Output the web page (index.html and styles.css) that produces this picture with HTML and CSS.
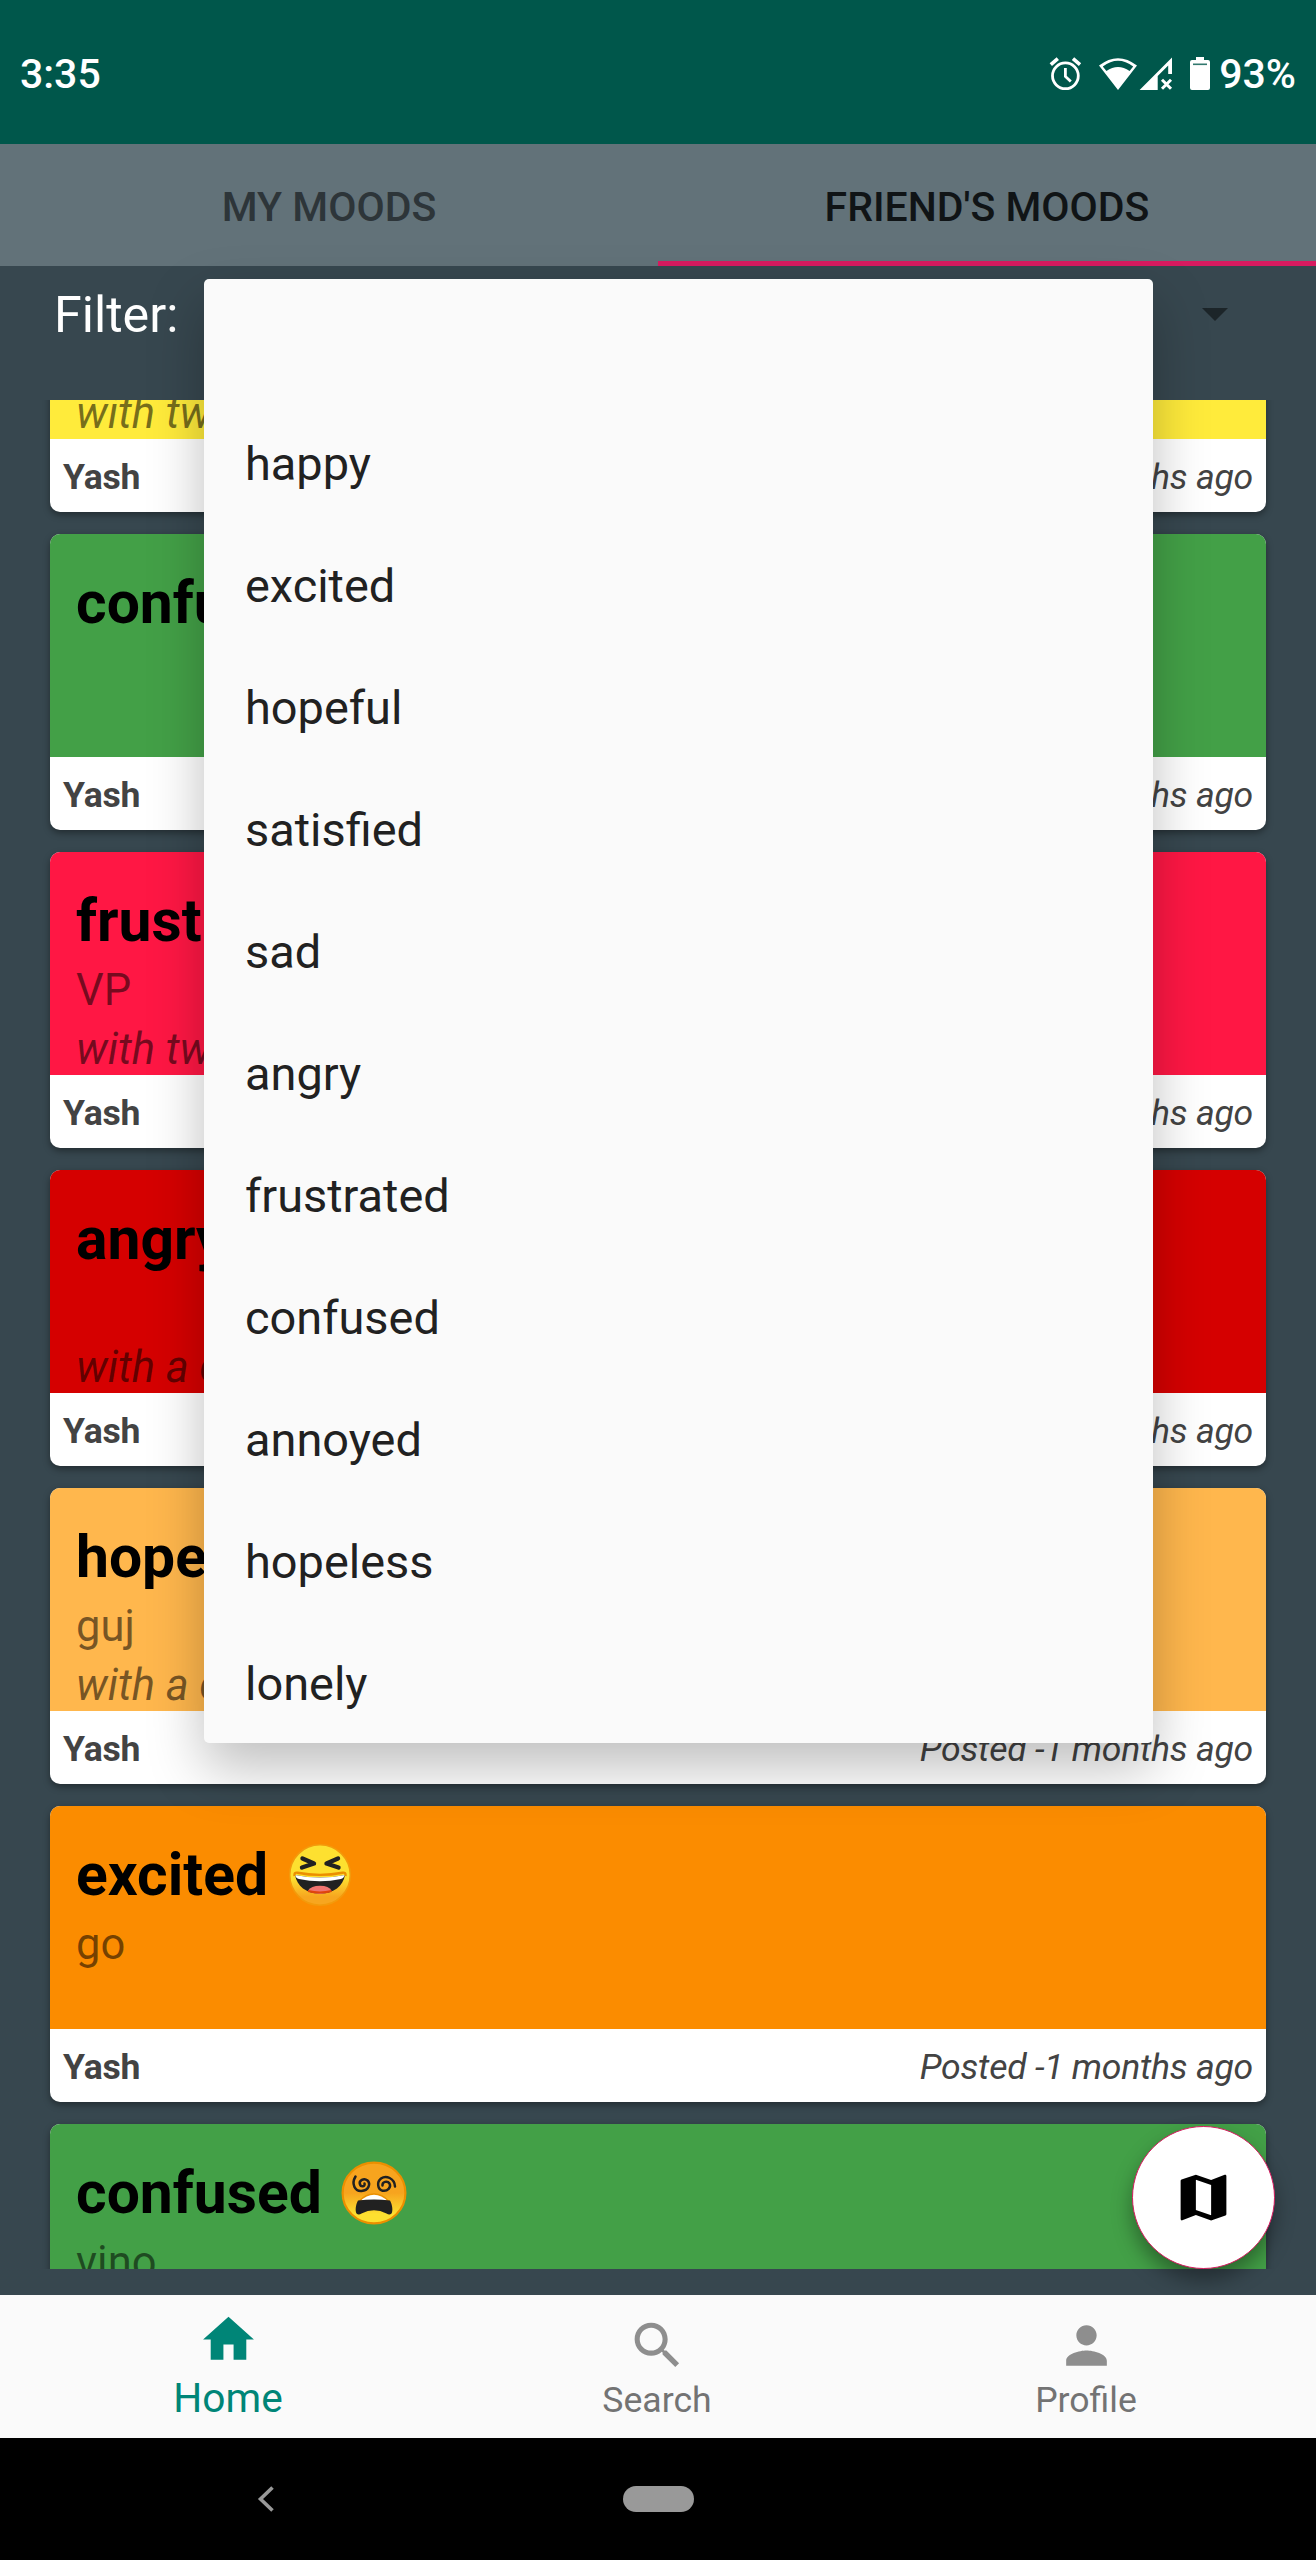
FILE: index.html
```html
<!DOCTYPE html>
<html lang="en">
<head>
<meta charset="utf-8">
<title>Friend's Moods</title>
<link rel="stylesheet" href="styles.css">
</head>
<body>
<div class="screen">
  <header class="status">
    <span class="status-text clock">3:35</span>
    <svg class="status-icons" width="162" height="36" viewBox="0 0 162 36">
      <g fill="none" stroke="#fff" stroke-width="2.8">
        <circle cx="16.4" cy="19.8" r="12.9"/>
        <path d="M16.4 12v8.4l5.4 5.2"/>
        <path d="M1.8 8.6l7-6M31 8.6l-7-6" stroke-width="3.6"/>
      </g>
      <g fill="#fff">
        <path fill-rule="evenodd" d="M50 9.6Q69 -5.2 88 9.6L69 34zM53.8 10.6L57.4 14.9Q69 7.2 80.6 14.9L84.2 10.6Q69 -1.2 53.8 10.6z"/>
        <path fill-rule="evenodd" d="M90.600 34L123 1.500V18H119.200V9.500L108.700 20V34z"/>
        <path d="M113 23.800l9 9M122 23.800l-9 9" stroke="#fff" stroke-width="3"/>
        <path d="M147 1h8v3h4q2 0 2 2v26q0 2-2 2h-16q-2 0-2-2v-26q0-2 2-2h4z"/>
      </g>
      <path d="M144 8.300h14" stroke="#00574b" stroke-width="1.600" opacity=".8"/>
    </svg>
    <span class="status-text battery">93%</span>
  </header>

  <nav class="tabs">
    <span class="tab">MY MOODS</span>
    <span class="tab tab-active">FRIEND'S MOODS</span>
  </nav>

  <main class="content">
    <div class="filter">
      <span class="filter-label">Filter:</span>
      <svg class="caret" width="26" height="13" viewBox="0 0 26 13"><path d="M0 0h26L13 13z" fill="#1c2529"/></svg>
    </div>

    <div class="list">
      <article class="card card-first">
        <div class="card-body yellow"><h2></h2><p class="note"></p><p class="social">with two people</p></div>
        <footer><b>Yash</b><i>Posted -1 months ago</i></footer>
      </article>
      <article class="card">
        <div class="card-body green"><h2>confused</h2></div>
        <footer><b>Yash</b><i>Posted -1 months ago</i></footer>
      </article>
      <article class="card">
        <div class="card-body pink"><h2>frustrated</h2><p class="note">VP</p><p class="social">with two people</p></div>
        <footer><b>Yash</b><i>Posted -1 months ago</i></footer>
      </article>
      <article class="card">
        <div class="card-body red"><h2>angry</h2><p class="note"></p><p class="social">with a crowd</p></div>
        <footer><b>Yash</b><i>Posted -1 months ago</i></footer>
      </article>
      <article class="card">
        <div class="card-body amber"><h2>hopeful</h2><p class="note">guj</p><p class="social">with a crowd</p></div>
        <footer><b>Yash</b><i>Posted -1 months ago</i></footer>
      </article>
      <article class="card">
        <div class="card-body orange">
          <h2>excited
            <svg class="emoji" width="66" height="66" viewBox="0 0 66 66">
              <defs><linearGradient id="laugh" x1="0" y1="0" x2="0" y2="1"><stop offset=".55" stop-color="#fde030"/><stop offset=".86" stop-color="#f7a61f"/></linearGradient></defs>
              <circle cx="33" cy="33" r="30.300" fill="url(#laugh)" stroke="#f39a0b" stroke-width="1.600"/>
              <g fill="none" stroke="#212121" stroke-width="4.400" stroke-linecap="round" stroke-linejoin="round">
                <path d="M15.500 16.500L27 21.500 15 25.500M51 16.500L39.500 21.500 51.500 25.500"/>
              </g>
              <path d="M8 33Q33 38 58 33C56 44 47 51.500 33 51.500S10 44 8 33z" fill="#212121"/>
              <path d="M8 33Q33 38 58 33Q56.500 36.500 54 37Q33 41.500 12 37Q9 36.500 8 33z" fill="#fff"/>
              <path d="M21 48.600Q24 43.800 33 43.800T44.500 48.600Q39 52 33 52T21 48.600z" fill="#f07470"/>
              <path d="M21 49Q33 52 44.500 49" fill="none" stroke="#e0440d" stroke-width="2"/>
              <path d="M7.500 34Q7 30 10.500 30.700Q33 35 55.500 30.700Q59 30 58.500 34" fill="none" stroke="#eb8f00" stroke-width="2.400"/>
            </svg>
          </h2>
          <p class="note">go</p>
        </div>
        <footer><b>Yash</b><i>Posted -1 months ago</i></footer>
      </article>
      <article class="card">
        <div class="card-body green">
          <h2>confused
            <svg class="emoji" width="66" height="66" viewBox="0 0 66 66">
              <defs><linearGradient id="dizzy" x1="0" y1="0" x2="0" y2="1"><stop offset=".5" stop-color="#f7a41e"/><stop offset=".85" stop-color="#fde030"/></linearGradient></defs>
              <ellipse cx="33" cy="33" rx="31.400" ry="30.400" fill="url(#dizzy)" stroke="#eb8f00" stroke-width="2.200"/>
              <g fill="none" stroke="#212121" stroke-width="2.500" stroke-linecap="round">
                <path d="M14.500 16.500C10 24 14 31.500 20.500 31C27.500 30.500 30 24 26.500 20.500C23 17.500 17.500 20.500 19 24.500C20 27.500 24.500 26.500 23.500 23.500"/>
                <path d="M54 26.500C53.500 18 45 15 40 18.500C35.500 22 36.500 29.500 41.500 30.700C46.500 31.700 50.500 27 48.500 23.500C46.500 20.500 41 21.500 41.500 25.500"/>
              </g>
              <path d="M18.500 41Q25 34 33 34T47.500 41z" fill="#fff" stroke="#eb8f00" stroke-width="1.600"/>
              <path d="M17 40.500Q33 38.500 49 40.500C51.500 45 52 51 50.500 53.500Q48.500 55.500 45.500 53.500Q33 47 20.500 53.500Q17.500 55.500 15.500 53.500C14 51 14.500 45 17 40.500z" fill="#212121"/>
            </svg>
          </h2>
          <p class="note">vino</p>
        </div>
        <footer><b>Yash</b><i>Posted -1 months ago</i></footer>
      </article>
    </div>

    <button class="fab" aria-label="Map">
      <svg width="61" height="61" viewBox="0 0 24 24"><path d="M20.500 3l-.16.03L15 5.100 9 3 3.360 4.900c-.21.07-.36.250-.36.480V20.500c0 .28.220.5.5.5l.16-.03L9 18.900l6 2.100 5.640-1.900c.21-.07.36-.25.36-.48V3.500c0-.28-.22-.5-.5-.5zM15 19l-6-2.110V5l6 2.110V19z"/></svg>
    </button>
  </main>

  <nav class="bottom">
    <a class="item item-active">
      <svg width="61" height="61" viewBox="0 0 24 24"><path d="M10 20v-6h4v6h5v-8h3L12 3 2 12h3v8z"/></svg>
      <span>Home</span>
    </a>
    <a class="item">
      <svg width="61" height="61" viewBox="0 0 24 24"><path d="M15.500 14h-.79l-.28-.27C15.410 12.590 16 11.110 16 9.500 16 5.910 13.090 3 9.500 3S3 5.910 3 9.500 5.910 16 9.500 16c1.610 0 3.090-.59 4.230-1.570l.27.28v.79l5 4.990L20.490 19l-4.990-5zm-6 0C7.010 14 5 11.990 5 9.500S7.010 5 9.500 5 14 7.010 14 9.500 11.990 14 9.500 14z"/></svg>
      <span>Search</span>
    </a>
    <a class="item">
      <svg width="61" height="61" viewBox="0 0 24 24"><path d="M12 12c2.210 0 4-1.790 4-4s-1.790-4-4-4-4 1.790-4 4 1.790 4 4 4zm0 2c-2.670 0-8 1.340-8 4v2h16v-2c0-2.660-5.330-4-8-4z"/></svg>
      <span>Profile</span>
    </a>
  </nav>

  <div class="system">
    <svg class="back" width="18" height="26" viewBox="0 0 18 26"><path d="M15.500 1.500L3.500 13l12 11.500" fill="none" stroke="#999" stroke-width="3.600"/></svg>
    <span class="pill"></span>
  </div>

  <ul class="menu">
    <li></li>
    <li>happy</li>
    <li>excited</li>
    <li>hopeful</li>
    <li>satisfied</li>
    <li>sad</li>
    <li>angry</li>
    <li>frustrated</li>
    <li>confused</li>
    <li>annoyed</li>
    <li>hopeless</li>
    <li>lonely</li>
  </ul>
</div>
</body>
</html>
```
FILE: styles.css
```css
* { box-sizing: border-box; margin: 0; padding: 0; }

body {
  width: 1316px;
  font-family: Roboto, "Liberation Sans", sans-serif;
  background: #37474f;
}

.screen {
  position: relative;
  display: flex;
  flex-direction: column;
  width: 1316px;
  height: 2560px;
  overflow: hidden;
}

/* Status bar */
.status {
  display: flex;
  align-items: center;
  height: 144px;
  padding: 3px 20px 0 20px;
  background: #00574b;
  color: #fff;
}
.status-text { font-size: 41px; font-weight: 500; line-height: 50px; }
.status-icons { margin-left: auto; margin-right: 8px; }

/* Tabs */
.tabs { display: flex; height: 122px; background: #627279; }
.tab {
  flex: 1;
  padding-top: 6px;
  border-bottom: 5px solid transparent;
  font-size: 41px;
  font-weight: 500;
  line-height: 114px;
  text-align: center;
  color: #2d3539;
}
.tab-active { color: #101416; border-bottom-color: #d81b60; }

/* Filter row and mood list */
.content {
  position: relative;
  display: flex;
  flex-direction: column;
  height: 2029px;
}
.filter {
  display: flex;
  align-items: center;
  justify-content: space-between;
  height: 96px;
  margin-bottom: 38px;
  padding: 0 88px 0 54px;
  color: #fff;
}
.filter-label { padding-top: 2px; font-size: 50.2px; line-height: 60px; }
.list {
  display: flex;
  flex-direction: column;
  gap: 22px;
  height: 1869px;
  padding: 0 50px;
  overflow: hidden;
}
.card {
  flex: none;
  height: 296px;
  border-radius: 10px;
  background: #fff;
  box-shadow: 0 3px 7px rgba(0, 0, 0, .38);
}
.card-first { margin-top: -184px; }
.card-body {
  height: 223px;
  padding: 32px 26px 0;
  border-radius: 10px 10px 0 0;
  overflow: hidden;
}
.card h2 {
  display: flex;
  align-items: center;
  gap: 19px;
  height: 74px;
  margin-bottom: 3px;
  font-size: 58.800px;
  line-height: 74px;
  font-weight: 700;
  color: #000;
}
.note, .social {
  height: 59px;
  font-size: 43.500px;
  line-height: 59px;
  color: rgba(0, 0, 0, .54);
}
.social { font-style: italic; }
.card footer {
  display: flex;
  justify-content: space-between;
  height: 73px;
  padding: 3px 13px 0;
  font-size: 35.600px;
  line-height: 70px;
  color: #434343;
}
.card footer b { letter-spacing: -.2px; }
.card footer i { letter-spacing: -.25px; }

.yellow { background: #ffeb3b; }
.green { background: #43a047; }
.pink { background: #ff1744; }
.red { background: #d50000; }
.amber { background: #ffb74d; }
.orange { background: #fb8c00; }

.fab {
  position: absolute;
  right: 41px;
  bottom: 26px;
  display: flex;
  align-items: center;
  justify-content: center;
  width: 143px;
  height: 143px;
  border: 1.500px solid #d81b60;
  border-radius: 50%;
  background: #fff;
  box-shadow: 0 11px 20px rgba(0, 0, 0, .36);
}

/* Bottom navigation */
.bottom {
  position: relative;
  display: flex;
  height: 143px;
  padding: 0 15px 0 14px;
  background: #fafafa;
}
.item {
  flex: 1;
  display: flex;
  flex-direction: column;
  align-items: center;
  padding-top: 20px;
  font-size: 35.600px;
  line-height: 48px;
  color: #737373;
  fill: #8e8e8e;
}
.item span { padding-right: 1px; }
.item-active { padding-top: 14px; font-size: 40.700px; line-height: 56px; color: #008577; fill: #008577; }

/* System navigation */
.system {
  display: flex;
  align-items: center;
  height: 122px;
  padding-left: 257px;
  background: #000;
}
.pill {
  width: 71px;
  height: 26px;
  margin-left: 348px;
  border-radius: 13px;
  background: #999;
}

/* Mood drop-down */
.menu {
  position: absolute;
  left: 204px;
  top: 279px;
  width: 949px;
  height: 1464px;
  border-radius: 5px;
  background: #fafafa;
  box-shadow: 0 24px 55px rgba(0, 0, 0, .26);
  list-style: none;
}
.menu li {
  height: 122px;
  padding: 3px 41px 0;
  font-size: 46.900px;
  line-height: 119px;
  color: #212121;
}
```
